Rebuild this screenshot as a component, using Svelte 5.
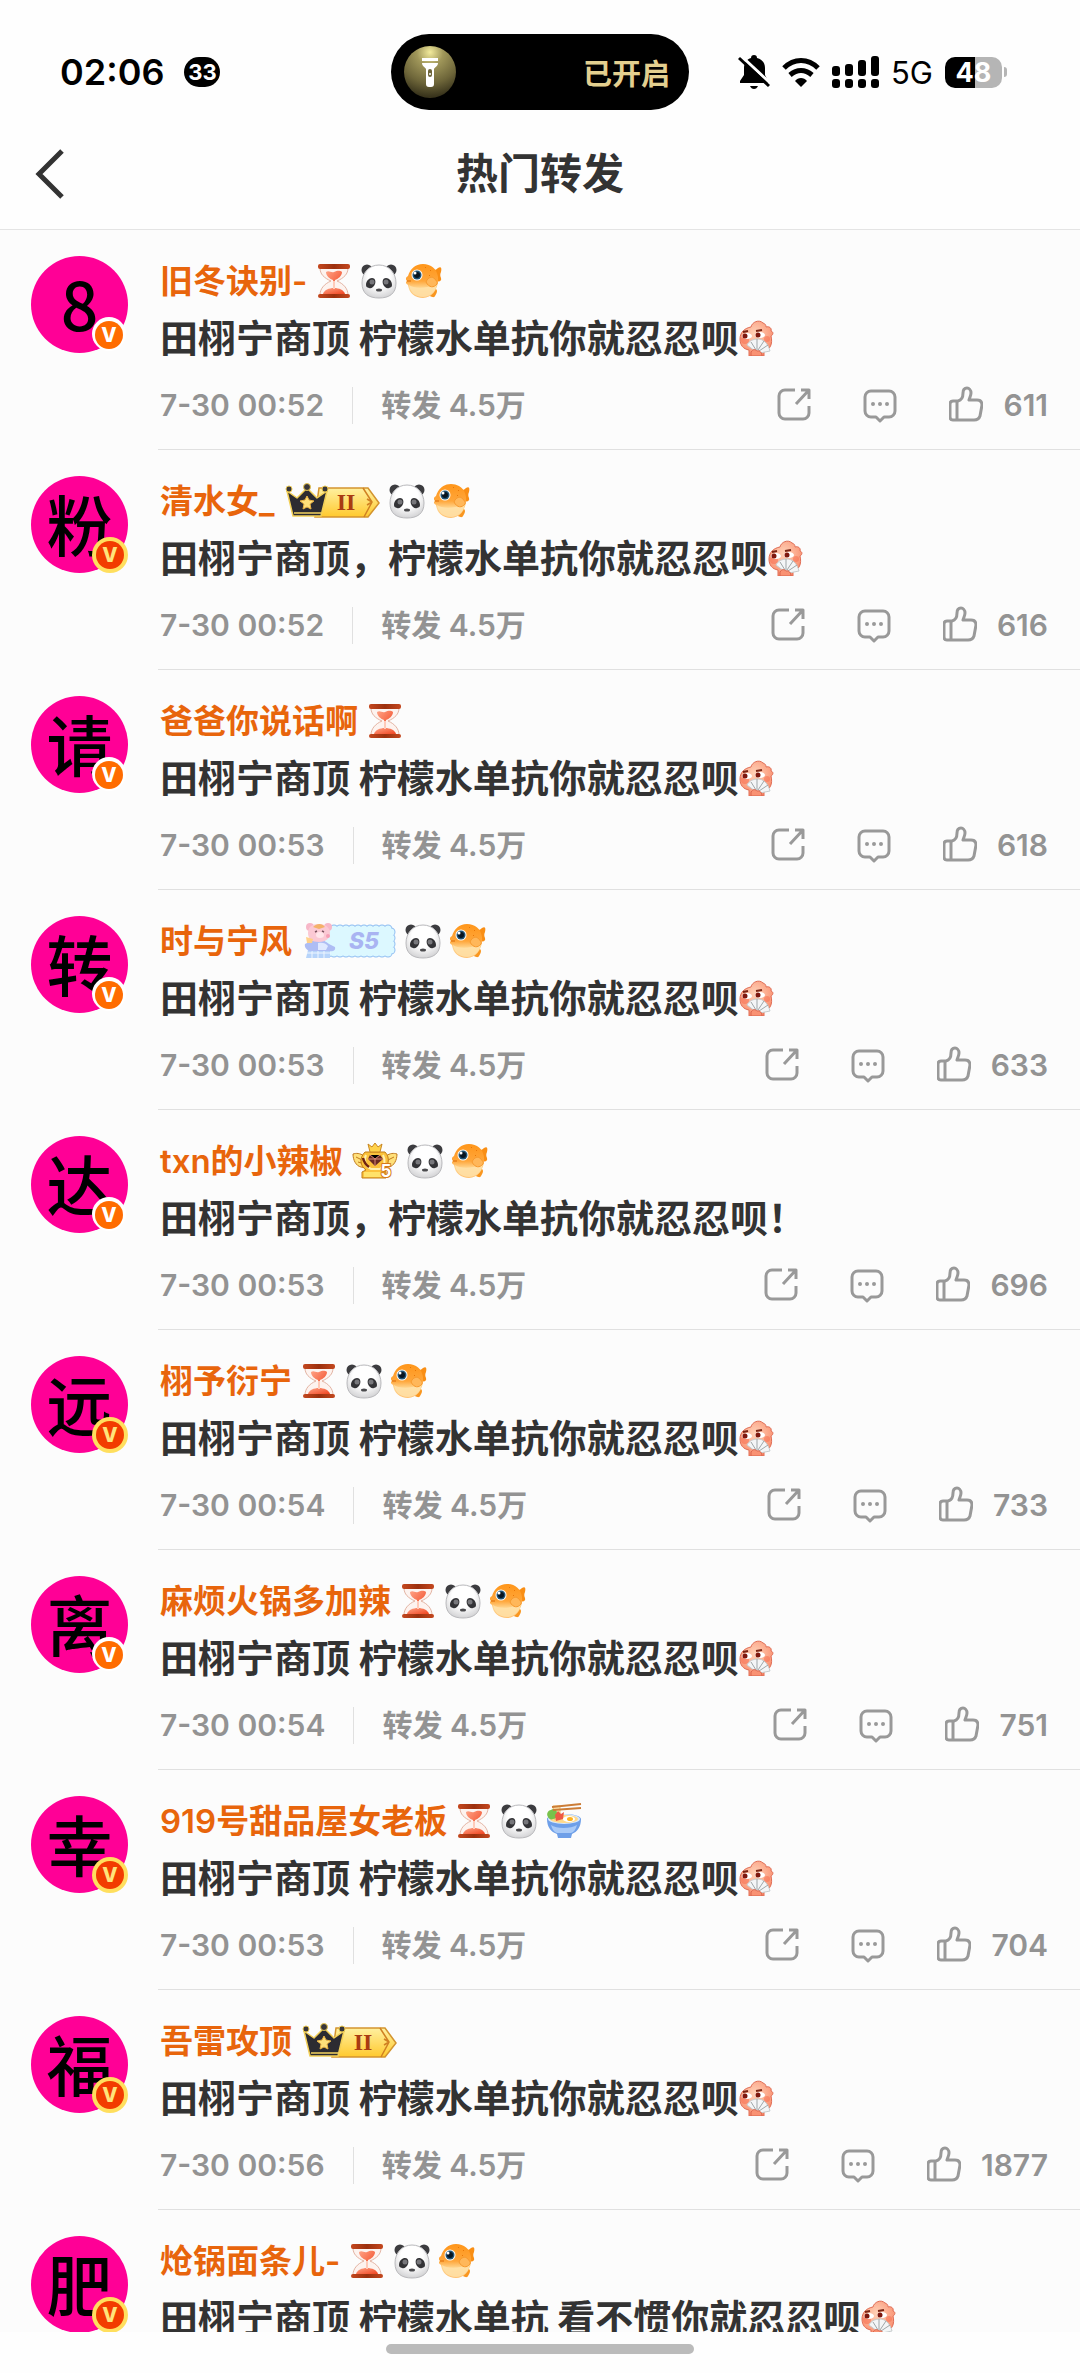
<script lang="ts">
  type Mark = 'hourglass' | 'panda' | 'fish' | 'noodles' | 'crown' | 'season' | 'medal';

  interface Repost {
    avatar: string;
    name: string;
    marks: Mark[];
    text: string;
    fan?: boolean;
    gold?: boolean;
    time?: string;
    likes?: number;
  }

  const trio: Mark[] = ['hourglass', 'panda', 'fish'];
  const slogan = '田栩宁商顶 柠檬水单抗你就忍忍呗';

  const reposts: Repost[] = [
    { avatar: '8', name: '旧冬诀别-', marks: trio, text: slogan, fan: true, time: '7-30 00:52', likes: 611 },
    { avatar: '粉', name: '清水女_', marks: ['crown', 'panda', 'fish'], text: '田栩宁商顶，柠檬水单抗你就忍忍呗', fan: true, gold: true, time: '7-30 00:52', likes: 616 },
    { avatar: '请', name: '爸爸你说话啊', marks: ['hourglass'], text: slogan, fan: true, time: '7-30 00:53', likes: 618 },
    { avatar: '转', name: '时与宁风', marks: ['season', 'panda', 'fish'], text: slogan, fan: true, time: '7-30 00:53', likes: 633 },
    { avatar: '达', name: 'txn的小辣椒', marks: ['medal', 'panda', 'fish'], text: '田栩宁商顶，柠檬水单抗你就忍忍呗！', time: '7-30 00:53', likes: 696 },
    { avatar: '远', name: '栩予衍宁', marks: trio, text: slogan, fan: true, gold: true, time: '7-30 00:54', likes: 733 },
    { avatar: '离', name: '麻烦火锅多加辣', marks: trio, text: slogan, fan: true, time: '7-30 00:54', likes: 751 },
    { avatar: '幸', name: '919号甜品屋女老板', marks: ['hourglass', 'panda', 'noodles'], text: slogan, fan: true, gold: true, time: '7-30 00:53', likes: 704 },
    { avatar: '福', name: '吾雷攻顶', marks: ['crown'], text: slogan, fan: true, gold: true, time: '7-30 00:56', likes: 1877 },
    { avatar: '肥', name: '炝锅面条儿-', marks: trio, text: '田栩宁商顶 柠檬水单抗 看不惯你就忍忍呗', fan: true, gold: true },
  ];
</script>

<!-- shared gradients -->
<svg class="defs" width="0" height="0" aria-hidden="true">
  <defs>
    <radialGradient id="pandaFace" cx="50%" cy="35%" r="65%">
      <stop offset="0.5" stop-color="#fff" />
      <stop offset="1" stop-color="#d4d4d6" />
    </radialGradient>
    <linearGradient id="fishBody" x1="0" y1="0" x2="0" y2="1">
      <stop offset="0" stop-color="#ff961a" />
      <stop offset="0.5" stop-color="#ffa63a" />
      <stop offset="0.7" stop-color="#ffd58e" />
      <stop offset="1" stop-color="#ffc171" />
    </linearGradient>
    <linearGradient id="gold" x1="0" y1="0" x2="0" y2="1">
      <stop offset="0" stop-color="#fff0a0" />
      <stop offset="1" stop-color="#ffc92e" />
    </linearGradient>
    <linearGradient id="wood" x1="0" y1="0" x2="1" y2="0">
      <stop offset="0" stop-color="#c4481f" />
      <stop offset="0.5" stop-color="#9c300e" />
      <stop offset="1" stop-color="#c4481f" />
    </linearGradient>
    <linearGradient id="sand" x1="0" y1="0" x2="1" y2="1">
      <stop offset="0" stop-color="#ffa386" />
      <stop offset="1" stop-color="#f0431e" />
    </linearGradient>
    <radialGradient id="skin" cx="45%" cy="35%" r="65%">
      <stop offset="0" stop-color="#ffd2b8" />
      <stop offset="1" stop-color="#f98c6c" />
    </radialGradient>
  </defs>
</svg>

{#snippet mark(kind: Mark)}
  {#if kind === 'hourglass'}
    <svg width="36" height="36" viewBox="0 0 36 36" aria-hidden="true">
      <path d="M4 5h28c0 6-4 10-11 13 7 3 11 8 11 14H4c0-6 4-11 11-14C8 15 4 11 4 5z" fill="#fdf3ef" stroke="#e3b3a2" />
      <path d="M10 9c3-2 5 1 8 0s5-2 8 0c0 4-4 7-7 8v9h-2v-9c-3-1-7-4-7-8z" fill="url(#sand)" />
      <path d="M7 31c1-4 6-6 11-6s10 2 11 6z" fill="url(#sand)" />
      <path d="M17 18h2v8h-2z" fill="#ffcbb9" />
      <rect x="2" y="1" width="32" height="5" rx="2" fill="url(#wood)" />
      <rect x="2" y="31" width="32" height="4" rx="2" fill="url(#wood)" />
    </svg>
  {:else if kind === 'panda'}
    <svg width="36" height="36" viewBox="0 0 36 36" aria-hidden="true">
      <circle cx="6" cy="7" r="5.500" fill="#3c3c3f" />
      <circle cx="30" cy="7" r="5.500" fill="#3c3c3f" />
      <path d="M18 2c10 0 17 8 17 18 0 11-7 15-17 15S1 31 1 20C1 10 8 2 18 2z" fill="url(#pandaFace)" stroke="#b9b9bc" />
      <path d="M5 22c0-4 3-7 6-7s4 3 3 6-4 5-6 4-3-1-3-3z" fill="#333336" />
      <path d="M31 22c0-4-3-7-6-7s-4 3-3 6 4 5 6 4 3-1 3-3z" fill="#333336" />
      <circle cx="11" cy="19" r="2.500" fill="#77777b" />
      <circle cx="25" cy="19" r="2.500" fill="#77777b" />
      <ellipse cx="18" cy="27" rx="3" ry="1.500" fill="#4a4a4d" />
    </svg>
  {:else if kind === 'fish'}
    <svg width="36" height="36" viewBox="0 0 36 36" aria-hidden="true">
      <path d="M26 8c2-1 4-1 6-3 3-2 4 0 3 4-1 2-1 4 0 6 1 3-2 4-4 3l-5-1z" fill="#f98e14" />
      <path d="M26 26c3-1 5 0 5 2s-1 3-2 5-3 1-5 0z" fill="#f9961f" />
      <path d="M17 1c8 0 14 5 15 13 1 12-6 21-15 21-8 0-14-5-15-13-2-1-3-3-1-4-2-2-1-4 1-5C4 6 9 1 17 1z" fill="url(#fishBody)" />
      <path d="M3 22c6 4 18 4 28-2-1 9-7 14-14 14C9 34 4 29 3 22z" fill="#ffe2ab" opacity="0.8" />
      <path d="M20 19c2-5 6-6 9-3 1 2 3 3 2 5-3 4-8 4-11-2z" fill="#ffb75a" stroke="#f79a2e" />
      <circle cx="11" cy="12" r="5.500" fill="#fff" />
      <circle cx="11" cy="12" r="4.500" fill="#1f5273" />
      <circle cx="11" cy="12" r="3" fill="#081520" />
      <circle cx="9" cy="10" r="1.500" fill="#fff" />
      <path d="M1 18h4" stroke="#d96a0b" />
      <path d="M19 4l1 1M24 7l1 1M23 12l1 1" stroke="#e87708" />
    </svg>
  {:else if kind === 'noodles'}
    <svg width="36" height="36" viewBox="0 0 36 36" aria-hidden="true">
      <path d="M1 16c0-3 8-5 17-5s17 2 17 5c0 8-4 13-9 15l-1 4H12l-1-4C5 29 1 24 1 16z" fill="#6e9fe8" />
      <path d="M5 22c5 4 20 4 26 0-1 4-3 7-6 8H11c-3-1-5-4-6-8z" fill="#a9caf7" />
      <ellipse cx="18" cy="16" rx="16" ry="5" fill="#d9e8fb" />
      <ellipse cx="18" cy="16" rx="14" ry="4" fill="#ffd98a" />
      <path d="M7 3h7v13H8z" fill="#ffe6ae" stroke="#eec06c" />
      <path d="M2 14c-2-3 0-7 3-7 2-2 6-1 6 3 1 3-1 6-4 6-2 1-4 0-5-2z" fill="#79c24b" />
      <path d="M9 12l3-4 3 3 3-2-1 7-7 2z" fill="#ee5a45" />
      <ellipse cx="23" cy="16" rx="6" ry="3" fill="#fff" />
      <ellipse cx="24" cy="16" rx="3" ry="2" fill="#ffb320" />
      <path d="M6 4L35 1M7 7L35 5" stroke="#cc7d37" stroke-width="2" />
    </svg>
  {:else if kind === 'crown'}
    <svg width="96" height="36" viewBox="-1 0 96 36" aria-hidden="true">
      <path d="M34 5h49l11 15-11 14H30z" fill="url(#gold)" stroke="#d3942f" stroke-width="1.500" />
      <path d="M78 5l9 14-8 15M87 19l-5-3M87 19l-5 3" fill="none" stroke="#d08022" stroke-width="1.500" />
      <path d="M2 8l6 25h28l6-25-10 7L22 5l-10 10z" fill="#2c2b31" stroke="#f2cf57" stroke-width="1.500" stroke-linejoin="round" />
      <path d="M9 30h27" stroke="#f4d55f" stroke-width="1.500" />
      <circle cx="4" cy="6" r="3" fill="#38363a" stroke="#e9c64f" />
      <circle cx="22" cy="4" r="3.500" fill="#38363a" stroke="#e9c64f" />
      <circle cx="40" cy="6" r="3" fill="#38363a" stroke="#e9c64f" />
      <path d="M22 13l2 4 5 1-4 3 1 5-4-2-4 2 1-5-4-3 5-1z" fill="#ffe07a" stroke="#e9b243" />
      <text class="rank" x="61" y="27" text-anchor="middle">II</text>
    </svg>
  {:else if kind === 'season'}
    <svg width="95" height="36" viewBox="-3 0 95 36" aria-hidden="true">
      <rect x="24" y="6" width="63" height="24" class="scallop outer" />
      <rect x="24" y="6" width="63" height="24" class="scallop inner" />
      <path d="M4 27h22v8H2z" fill="#b7d4fa" />
      <path d="M3 30h24M8 27v8M14 27v8M20 27v8" stroke="#eef6ff" />
      <path d="M5 19c6-3 15-3 20 2l6 3c1 4-3 5-6 4H9c-6 1-9-4-8-7z" fill="#aebdf4" />
      <path d="M14 20c4-1 8 0 10 3l-2 4h-8z" fill="#dfe9ff" />
      <circle cx="6" cy="4" r="4" fill="#f7b7c8" />
      <circle cx="24" cy="4" r="4" fill="#f7b7c8" />
      <path d="M15 1c7 0 11 4 11 9s-4 9-11 9S4 16 4 10s4-9 11-9z" fill="#fbc9d4" />
      <path d="M9 4c4-4 9-4 12 0l-6 2z" fill="#f4b269" />
      <path d="M11 9l2-1M18 8l2 1" stroke="#7c5560" stroke-width="1.500" />
      <ellipse cx="16" cy="12" rx="4" ry="3" fill="#ffe6ea" />
      <circle cx="24" cy="13" r="2" fill="#f79fb5" />
      <path d="M2 14l7 2-1 4H3z" fill="#ffd08a" />
      <text class="level" x="60" y="26" text-anchor="middle">S5</text>
    </svg>
  {:else}
    <svg width="46" height="36" viewBox="0 0 46 36" aria-hidden="true">
      <path d="M12 13C8 10 4 10 1 11c0 6 3 12 8 13l6 1zM34 13c4-3 8-3 11-2 0 6-3 12-8 13l-6 1z" fill="#ffe07a" stroke="#c07a1c" />
      <path d="M4 14l8 4M6 19l7 2M42 14l-8 4" stroke="#c07a1c" />
      <path d="M13 9h20c6 6 3 15-2 18l3 2v6H10v-6l4-2C8 23 7 15 13 9z" fill="#fbc23c" stroke="#c27c16" />
      <path d="M12 29h18v5H12z" fill="#ffe269" />
      <path d="M16 1l4 3 3-4 3 4 4-3-2 8H18z" fill="#ffd24a" stroke="#c98620" />
      <path d="M14 12c-3 6 0 12 5 14h9c4-3 6-8 3-14" fill="none" stroke="#fff0b0" stroke-width="2" />
      <path d="M18 12h10l3 4-8 7-7-7z" fill="#6a2a22" />
      <path d="M18 12l5 4 5-4M16 16h15M23 16v7" stroke="#dc8a77" />
      <path d="M11 15c1 4 3 7 6 9" fill="none" stroke="#70230f" stroke-width="2.500" />
      <text class="medal-level" x="34" y="34" text-anchor="middle">5</text>
    </svg>
  {/if}
{/snippet}

<div class="app" lang="zh-CN">
  <header>
    <div class="status">
      <div class="left">
        <span class="clock">02:06</span>
        <span class="pill">33</span>
      </div>
      <div class="island">
        <svg width="52" height="52" viewBox="0 0 52 52" aria-hidden="true">
          <defs>
            <radialGradient id="torch" cx="50%" cy="12%" r="85%">
              <stop offset="0" stop-color="#f2ea9c" />
              <stop offset="0.300" stop-color="#a0975a" />
              <stop offset="0.700" stop-color="#6d6539" />
              <stop offset="1" stop-color="#39341c" />
            </radialGradient>
          </defs>
          <circle cx="26" cy="26" r="26" fill="url(#torch)" />
          <path d="M18 12h16v3H18zM18 17h16c0 3-3 4-4 6v15a3 3 0 0 1-3 3h-2a3 3 0 0 1-3-3V23c-1-2-4-3-4-6z" fill="#fff" />
          <rect x="24" y="23" width="4" height="8" rx="2" fill="#6d6539" />
          <circle cx="26" cy="28" r="1" fill="#fff" />
        </svg>
        <span>已开启</span>
      </div>
      <div class="right">
        <svg width="32" height="36" viewBox="0 0 32 36" aria-hidden="true">
          <path d="M16 1c2 0 3 1 3 3 5 1 8 5 8 10v7l3 6v2H2v-2l4-6v-7c0-5 3-9 7-10 0-2 1-3 3-3z" fill="#000" />
          <path d="M12 32h8c-1 2-2 3-4 3s-3-1-4-3z" fill="#000" />
          <path d="M2 1l30 28" stroke="#fff" stroke-width="3" />
          <path d="M1 4l30 28" stroke="#000" stroke-width="3" />
        </svg>
        <svg width="38" height="30" viewBox="0 0 38 30" aria-hidden="true">
          <path d="M2 11c10-10 24-10 34 0" fill="none" stroke="#000" stroke-width="5" />
          <path d="M8 18c7-6 15-6 22 0" fill="none" stroke="#000" stroke-width="5" />
          <path d="M19 30l-6-6c3-4 9-4 12 0z" fill="#000" />
        </svg>
        <svg width="47" height="32" viewBox="0 0 47 32" aria-hidden="true">
          <rect x="0" y="10" width="8" height="10" rx="3" />
          <rect x="13" y="8" width="8" height="12" rx="3" />
          <rect x="26" y="4" width="8" height="16" rx="3" />
          <rect x="39" y="0" width="8" height="20" rx="3" />
          <rect x="0" y="23" width="8" height="9" rx="3" />
          <rect x="13" y="23" width="8" height="9" rx="3" />
          <rect x="26" y="23" width="8" height="9" rx="3" />
          <rect x="39" y="23" width="8" height="9" rx="3" />
        </svg>
        <span class="network">5G</span>
        <span class="battery"><span class="charge">48</span><span class="nub"></span></span>
      </div>
    </div>
    <nav>
      <button type="button" class="back" aria-label="返回">
        <svg width="30" height="50" viewBox="0 0 30 50" aria-hidden="true">
          <path d="M27 2L4 25l23 23" fill="none" stroke="#333" stroke-width="5" />
        </svg>
      </button>
      <h1>热门转发</h1>
    </nav>
  </header>

  <main>
    {#each reposts as item}
      <article>
        <div class="avatar">
          {item.avatar}
          <svg class="verified" width="36" height="36" viewBox="0 0 36 36" aria-hidden="true">
            {#if item.gold}
              <circle cx="18" cy="18" r="18" fill="#ffdf5e" />
              <circle cx="18" cy="18" r="14" fill="#f23c00" />
              <text class="vee" x="18" y="25" text-anchor="middle" fill="#ffe57a">V</text>
            {:else}
              <circle cx="17" cy="17" r="17" fill="#fff" />
              <circle cx="17" cy="18" r="14" fill="#ff6c00" />
              <text class="vee" x="17" y="25" text-anchor="middle" fill="#fff">V</text>
            {/if}
          </svg>
        </div>
        <div class="body">
          <div class="who">
            <a href="#user">{item.name}</a>
            {#each item.marks as kind}
              {@render mark(kind)}
            {/each}
          </div>
          <div class="text">
            <span>{item.text}</span>
            {#if item.fan}
              <svg width="36" height="36" viewBox="0 0 36 36" aria-hidden="true">
                <path d="M10 36v-6C4 29 1 25 1 19c0-7 5-11 11-12 1-5 8-8 12-4 3 1 3 3 3 4 3-1 6 1 5 4 3 1 2 4 0 5 2 8-1 14-7 15v5z" fill="url(#skin)" stroke="#e06d55" />
                <circle cx="6" cy="20" r="4" fill="#f8694c" opacity="0.500" />
                <circle cx="28" cy="19" r="3" fill="#f8694c" opacity="0.500" />
                <path d="M4 12l5-1M17 11l6-1" stroke="#7a2414" stroke-width="2" />
                <ellipse cx="8" cy="16" rx="5" ry="3" fill="#fff" />
                <ellipse cx="21" cy="15" rx="5" ry="3" fill="#fff" />
                <circle cx="6" cy="16" r="2.500" fill="#7d170f" />
                <circle cx="19" cy="15" r="2.500" fill="#7d170f" />
                <path d="M16 31L8 25c2-4 6-6 11-6s10 4 12 12l-10 2z" fill="#f4f6f7" stroke="#c7cccd" />
                <path d="M17 30l-5-8M18 30v-11M19 30l6-9M20 31l9-6" stroke="#9fa6a8" />
                <path d="M12 36v-4c2-3 4-3 6-1 3-1 5 2 5 5z" fill="#f99273" stroke="#d9644c" />
              </svg>
            {/if}
          </div>
          {#if item.time}
            <div class="meta">
              <time>{item.time}</time>
              <span class="reposts">转发 4.5万</span>
              <div class="actions">
                <button type="button" aria-label="转发">
                  <svg width="34" height="38" viewBox="0 0 34 38" aria-hidden="true">
                    <path d="M18 4H8a6 6 0 0 0-6 6v17a6 6 0 0 0 6 6h18a6 6 0 0 0 6-6v-7" />
                    <path d="M24 4h8v9M32 4L19 18" />
                  </svg>
                </button>
                <button type="button" aria-label="评论">
                  <svg width="34" height="38" viewBox="0 0 34 38" aria-hidden="true">
                    <path d="M8 5h18a6 6 0 0 1 6 6v14a6 6 0 0 1-6 6h-5l-4 4-4-4H8a6 6 0 0 1-6-6V11a6 6 0 0 1 6-6z" />
                    <path d="M10 18h0M17 18h0M24 18h0" class="dots" />
                  </svg>
                </button>
                <button type="button" aria-label="赞">
                  <svg width="34" height="38" viewBox="0 0 34 38" aria-hidden="true">
                    <path d="M9 15c4-1 5-4 5-8 0-3 1-5 4-5 2 0 4 2 4 5 0 2-1 4-2 7h8c4 0 5 2 5 5l-2 11c-1 3-3 4-6 4H4c-2 0-3-1-3-3V18c0-2 1-3 3-3zM8 15v19" />
                  </svg>
                  <span>{item.likes}</span>
                </button>
              </div>
            </div>
          {/if}
        </div>
      </article>
    {/each}
  </main>

  <footer><span class="home"></span></footer>
</div>

<style>
  :global(body) {
    margin: 0;
    background: #fefefe;
  }

  .defs {
    position: absolute;
  }

  .app {
    display: flex;
    flex-direction: column;
    height: 100vh;
    font-family: Inter, "Noto Sans CJK SC", sans-serif;
    color: #333;
  }

  svg {
    display: block;
    flex-shrink: 0;
  }

  button {
    border: none;
    padding: 0;
    background: none;
    font: inherit;
    color: inherit;
    cursor: pointer;
  }

  header {
    flex-shrink: 0;
    border-bottom: 1px solid #e4e4e4;
  }

  .status {
    display: grid;
    grid-template-columns: 1fr 298px 1fr;
    align-items: center;
    padding: 34px 0 8px;
    color: #000;
  }

  .left {
    display: flex;
    align-items: center;
    gap: 20px;
    padding-left: 60px;
  }

  .clock {
    font-size: 36px;
    font-weight: 600;
  }

  .pill {
    width: 36px;
    border-radius: 15px;
    background: #000;
    color: #fff;
    font-size: 22px;
    font-weight: 700;
    line-height: 30px;
    text-align: center;
  }

  .island {
    display: flex;
    align-items: center;
    justify-content: space-between;
    box-sizing: border-box;
    height: 76px;
    padding: 0 19px 0 13px;
    border-radius: 38px;
    background: #000;
    color: #e3cf8f;
    font-size: 29px;
    font-weight: 700;
  }

  .right {
    display: flex;
    align-items: center;
    justify-content: flex-end;
    gap: 12px;
    padding-right: 73px;
  }

  .network {
    font-size: 31px;
  }

  .battery {
    display: flex;
    align-items: center;
    gap: 2px;
  }

  .charge {
    width: 57px;
    border-radius: 10px;
    background: linear-gradient(90deg, #000 53%, #b5b5b5 53%);
    color: #fff;
    font-size: 27px;
    font-weight: 700;
    line-height: 31px;
    text-align: center;
  }

  .nub {
    width: 3px;
    height: 10px;
    border-radius: 0 3px 3px 0;
    background: #b5b5b5;
  }

  nav {
    display: grid;
    grid-template-columns: 120px 1fr 120px;
    align-items: center;
    height: 111px;
  }

  .back {
    display: flex;
    padding-left: 35px;
  }

  h1 {
    margin: 0;
    font-size: 42px;
    font-weight: 700;
    line-height: 60px;
    text-align: center;
  }

  main {
    flex: 1;
    min-height: 0;
    overflow-y: auto;
    scrollbar-width: none;
    background: #fcfcfc;
  }

  article {
    display: flex;
    gap: 30px;
    padding-left: 31px;
  }

  .avatar {
    position: relative;
    flex-shrink: 0;
    width: 97px;
    height: 97px;
    margin-top: 26px;
    border-radius: 50%;
    background: #ff0096;
    color: #000;
    font-family: "Noto Sans CJK SC", sans-serif;
    font-size: 66px;
    font-weight: 500;
    line-height: 92px;
    text-align: center;
  }

  .verified {
    position: absolute;
    right: 0;
    bottom: 0;
  }

  .vee {
    font: 800 20px Inter, sans-serif;
  }

  .body {
    flex: 1;
    min-width: 0;
    padding: 26px 0 0 2px;
    border-bottom: 1px solid #e0e0e0;
  }

  .who {
    display: flex;
    align-items: center;
    gap: 9px;
    height: 50px;
  }

  .who a {
    color: #e8650c;
    font-size: 33px;
    font-weight: 600;
    line-height: 50px;
    text-decoration: none;
  }

  .rank {
    font: 700 24px "Liberation Serif", serif;
    fill: #a93a12;
  }

  .scallop {
    fill: #dcf8ff;
    stroke-linecap: round;
    stroke-dasharray: 0 6;
  }

  .scallop.outer {
    stroke: #8fbdf2;
    stroke-width: 9px;
  }

  .scallop.inner {
    stroke: #dcf8ff;
    stroke-width: 7px;
  }

  .level {
    font: italic 800 23px Inter, sans-serif;
    fill: #a9b4f2;
  }

  .medal-level {
    font: 700 17px Inter, sans-serif;
    fill: #fff;
    stroke: #d57b1b;
    stroke-width: 2px;
    paint-order: stroke;
  }

  .text {
    display: flex;
    align-items: center;
    height: 64px;
    font-family: "Noto Sans CJK SC", sans-serif;
    font-size: 38px;
    font-weight: 700;
    white-space: nowrap;
  }

  .text span {
    padding-bottom: 6px;
  }

  .meta {
    display: flex;
    align-items: center;
    height: 70px;
    padding-bottom: 9px;
    color: #939393;
    font-size: 30px;
    font-weight: 600;
  }

  .reposts {
    margin-left: 28px;
    padding-left: 28px;
    border-left: 1px solid #e0e0e0;
    line-height: 37px;
  }

  .actions {
    display: flex;
    align-items: center;
    gap: 52px;
    margin-left: auto;
    padding-right: 32px;
  }

  .actions button {
    display: flex;
    align-items: center;
    gap: 20px;
  }

  .actions path {
    fill: none;
    stroke: #999;
    stroke-width: 3px;
    stroke-linejoin: round;
  }

  .actions .dots {
    stroke-width: 4px;
    stroke-linecap: round;
  }

  footer {
    display: flex;
    flex-shrink: 0;
    justify-content: center;
    height: 29px;
    padding-top: 12px;
    background: #fefefe;
  }

  .home {
    width: 308px;
    height: 10px;
    border-radius: 5px;
    background: #bbb;
  }
</style>
